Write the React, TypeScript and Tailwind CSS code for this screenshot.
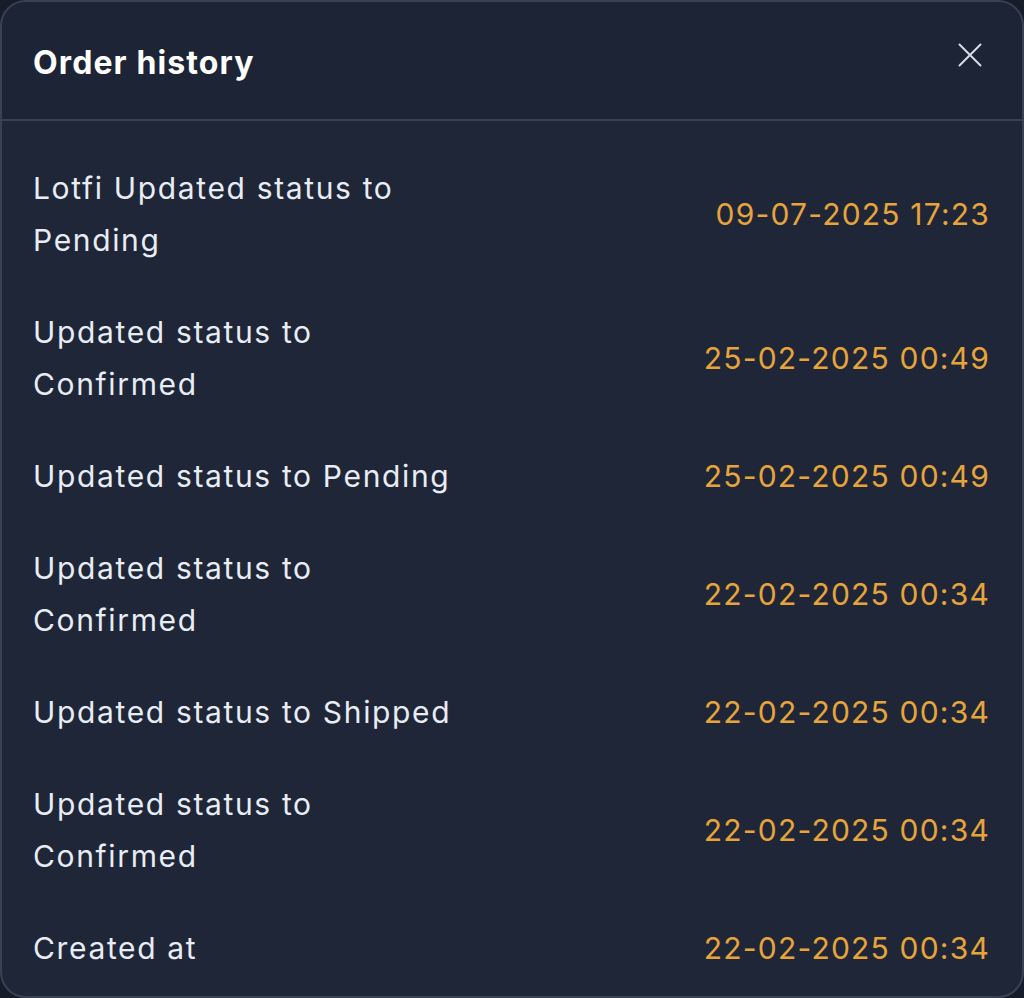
type HistoryItem = {
  label: string;
  date: string;
};

const history: HistoryItem[] = [
  { label: "Lotfi Updated status to Pending", date: "09-07-2025 17:23" },
  { label: "Updated status to Confirmed", date: "25-02-2025 00:49" },
  { label: "Updated status to Pending", date: "25-02-2025 00:49" },
  { label: "Updated status to Confirmed", date: "22-02-2025 00:34" },
  { label: "Updated status to Shipped", date: "22-02-2025 00:34" },
  { label: "Updated status to Confirmed", date: "22-02-2025 00:34" },
  { label: "Created at", date: "22-02-2025 00:34" },
];

export default function App() {
  return (
    <div className="min-h-[998px] w-[1024px] bg-[#161c2a] font-['Inter',sans-serif]">
      <div className="flex h-[998px] w-[1024px] flex-col overflow-hidden rounded-[26px] border-2 border-[#394253] bg-[#1f2638]">
        <div className="flex h-[119px] items-start justify-between border-b-2 border-[#394253] bg-[#1d2435] pl-[31px] pr-[40px] pt-[41px]">
          <h2 className="text-[32px] font-bold leading-[40px] tracking-[0.035em] text-white">
            Order history
          </h2>
          <button type="button" className="text-[#d6dbe4]">
            <svg
              width="24"
              height="24"
              viewBox="0 0 24 24"
              fill="none"
              stroke="currentColor"
              strokeWidth="2"
              strokeLinecap="round"
            >
              <path d="M1.5 1.5 22.5 22.5M22.5 1.5 1.5 22.5" />
            </svg>
          </button>
        </div>

        <div className="flex flex-col gap-[40px] pl-[31px] pr-[32px] pt-[41px]">
          {history.map((item, i) => (
            <div key={i} className="flex items-center justify-between">
              <p className="w-[440px] text-[30px] leading-[52px] tracking-[0.055em] text-[#e8ecf4]">
                {item.label}
              </p>
              <span className="text-[30px] leading-[52px] tracking-[0.04em] text-[#e6a43b]">
                {item.date}
              </span>
            </div>
          ))}
        </div>
      </div>
    </div>
  );
}
